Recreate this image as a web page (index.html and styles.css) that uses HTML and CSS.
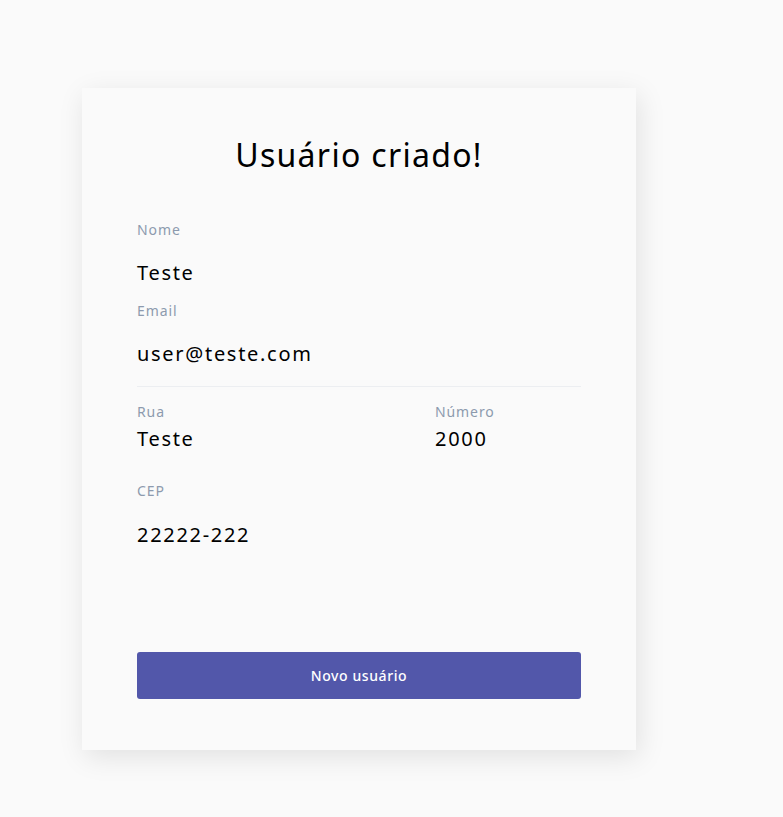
FILE: index.html
```html
<!DOCTYPE html>
<html lang="pt-BR">
<head>
<meta charset="utf-8">
<title>Usuário criado!</title>
<link rel="stylesheet" href="styles.css">
</head>
<body>
<main class="page">
  <section class="card">
    <h1 class="title">Usuário criado!</h1>
    <div class="field">
      <span class="label">Nome</span>
      <span class="value">Teste</span>
    </div>
    <div class="field">
      <span class="label">Email</span>
      <span class="value">user@teste.com</span>
    </div>
    <hr class="divider">
    <div class="row">
      <div class="field compact grow">
        <span class="label">Rua</span>
        <span class="value">Teste</span>
      </div>
      <div class="field compact num">
        <span class="label">Número</span>
        <span class="value">2000</span>
      </div>
    </div>
    <div class="field cep">
      <span class="label">CEP</span>
      <span class="value">22222-222</span>
    </div>
    <button class="btn" type="button">Novo usuário</button>
  </section>
</main>
</body>
</html>
```
FILE: styles.css
```css
* { box-sizing: border-box; }
html, body { margin: 0; padding: 0; background: #fafafa; }
body {
  font-family: "Noto Sans", "Open Sans", sans-serif;
  color: #000;
}
.page {
  padding: 88px 0 67px 82px;
}
.card {
  width: 554px;
  height: 662px;
  background: #fafafa;
  box-shadow: 3px 7px 26px rgba(0,0,0,0.10);
  padding: 43px 55px 51px;
  display: flex;
  flex-direction: column;
}
.title {
  margin: 0 0 39.5px;
  font-size: 32px;
  line-height: 48px;
  font-weight: 400;
  letter-spacing: 1.3px;
  text-align: center;
}
.field {
  display: flex;
  flex-direction: column;
  margin-bottom: 11.5px;
}
.label {
  font-size: 14px;
  line-height: 21px;
  color: #8d9aae;
  letter-spacing: 0.9px;
  margin-bottom: 18.5px;
}
.value {
  font-size: 20px;
  line-height: 30px;
  color: #000;
  letter-spacing: 1.7px;
}
.divider {
  border: 0;
  border-top: 1px solid #eceef1;
  margin: 5.5px 0 14px;
}
.row {
  display: flex;
}
.grow { flex: 0 0 298px; }
.num { flex: 1; }
.compact .label { margin-bottom: 1.5px; }
.compact { margin-bottom: 26.5px; }
.cep { margin-bottom: 0; }
.btn {
  margin-top: auto;
  height: 47px;
  width: 100%;
  border: 0;
  border-radius: 3px;
  background: #5257aa;
  color: #fff;
  font-family: inherit;
  font-size: 14px;
  font-weight: 500;
  letter-spacing: 0.6px;
  cursor: pointer;
}
```
